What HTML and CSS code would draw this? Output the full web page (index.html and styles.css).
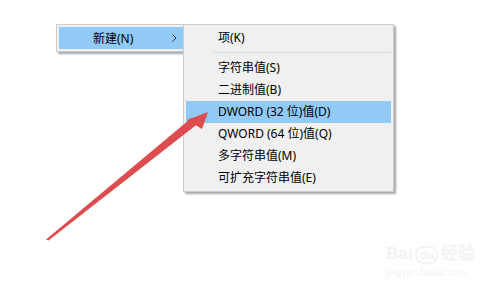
FILE: index.html
```html
<!DOCTYPE html>
<html lang="zh-CN">
<head>
    <meta charset="UTF-8">
    <title>新建菜单</title>
    <link rel="stylesheet" href="styles.css">
</head>
<body>

<div class="desk">
    <div class="menu menu-parent">
        <div class="item active">
            <span class="label">新建(N)</span>
            <svg class="chevron" width="5" height="8" viewBox="0 0 5 8"><path d="M0.5 0.5 L4 4 L0.5 7.5" fill="none" stroke="#333" stroke-width="1"/></svg>
        </div>
    </div>

    <div class="menu menu-sub">
        <div class="item">项(K)</div>
        <div class="sep"></div>
        <div class="item">字符串值(S)</div>
        <div class="item">二进制值(B)</div>
        <div class="item active">DWORD (32 位)值(D)</div>
        <div class="item">QWORD (64 位)值(Q)</div>
        <div class="item">多字符串值(M)</div>
        <div class="item">可扩充字符串值(E)</div>
    </div>

    <!-- red pointer drawn over the screenshot -->
    <svg class="pointer" width="491" height="290" viewBox="0 0 491 290">
        <polygon points="46,239.5 192,117.5 197.5,124 48.5,240.5" fill="#dd4c4e"/>
        <polygon points="208,112 187,120 202,129" fill="#dd4c4e"/>
    </svg>

    <div class="mark">
        <div class="mark-logo">Bai<span class="paw">du</span>经验</div>
        <div class="mark-url">jingyan.baidu.com</div>
    </div>
</div>

</body>
</html>
```

FILE: styles.css
```css
body {
    margin: 0;
    background: #ffffff;
    font-family: "Noto Sans", "Noto Sans CJK SC", sans-serif;
    font-size: 12px;
    color: #000;
}
.desk {
    position: relative;
    width: 491px;
    height: 290px;
    overflow: hidden;
}
.menu {
    position: absolute;
    background: #f0f0f0;
    border: 1px solid #cccccc;
    padding: 2px;
    display: flex;
    flex-direction: column;
    box-shadow: 2px 2px 2px rgba(0, 0, 0, 0.35);
}
.menu-parent {
    left: 56px;
    top: 24px;
    width: 124px;
}
.menu-sub {
    left: 183px;
    top: 24px;
    width: 205px;
}
.item {
    height: 22px;
    line-height: 21px;
    padding-left: 32px;
    white-space: nowrap;
}
.menu-parent .item {
    padding-left: 34px;
    display: flex;
    align-items: center;
    justify-content: space-between;
    padding-right: 6px;
}
.item.active {
    background: #91c9f7;
}
.chevron {
    display: block;
}
.sep {
    height: 1px;
    background: #d7d7d7;
    margin: 3px 0 4px 27px;
}
.pointer {
    position: absolute;
    left: 0;
    top: 0;
}
.mark {
    position: absolute;
    left: 386px;
    top: 244px;
    color: #f3f3f3;
    font-family: "Liberation Sans", sans-serif;
}
.mark-logo {
    font-size: 17px;
    font-weight: bold;
    line-height: 20px;
}
.paw {
    font-size: 12px;
    border: 2px solid #f3f3f3;
    border-radius: 8px;
    padding: 0 2px;
    margin: 0 3px;
}
.mark-url {
    font-size: 10px;
    margin-top: 2px;
}
```
